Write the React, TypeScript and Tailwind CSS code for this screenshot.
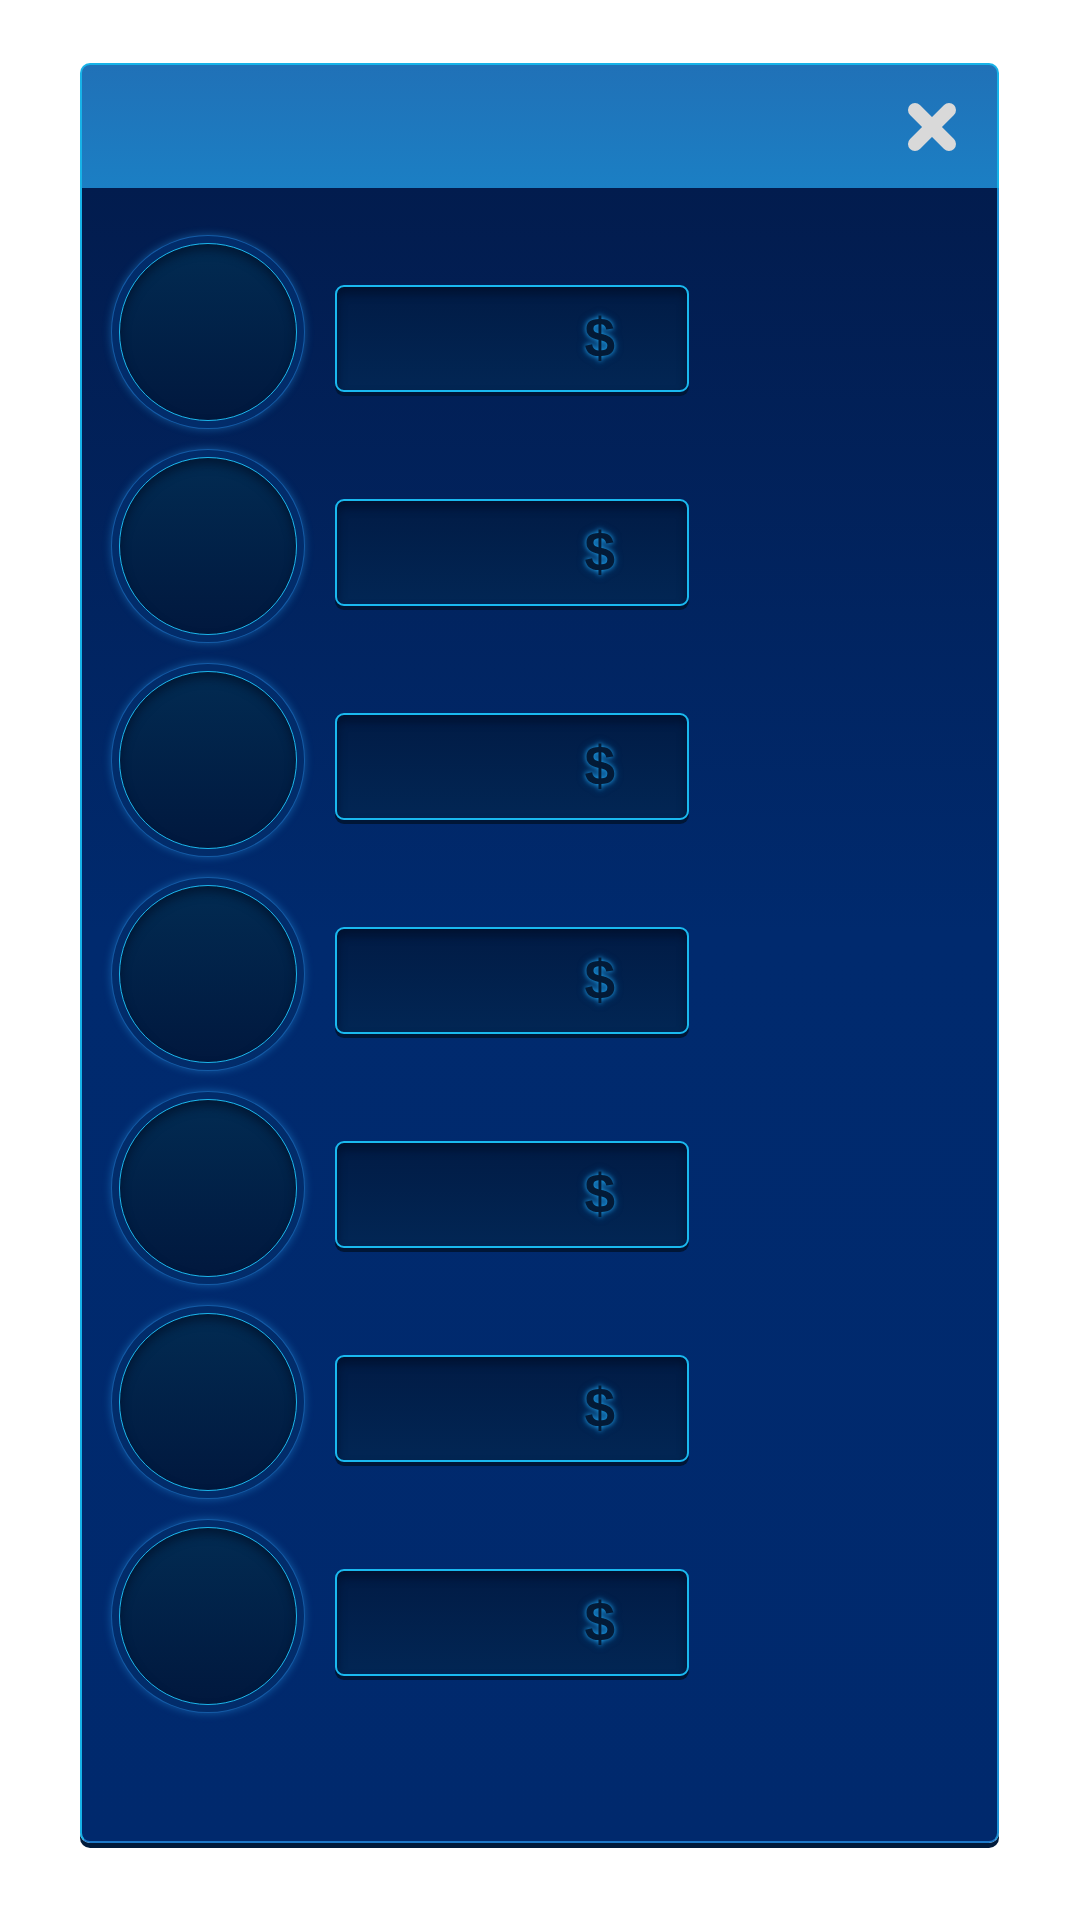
import React from 'react';

const rows = [0, 1, 2, 3, 4, 5, 6];

const CloseIcon: React.FC = () => (
  <svg width="50" height="50" viewBox="0 0 50 50">
    <line x1="8" y1="8" x2="42" y2="42" stroke="#d9d9d9" strokeWidth="14" strokeLinecap="round" />
    <line x1="42" y1="8" x2="8" y2="42" stroke="#d9d9d9" strokeWidth="14" strokeLinecap="round" />
  </svg>
);

const Row: React.FC = () => (
  <div className="flex items-center gap-[30px]">
    {/* avatar slot */}
    <div className="w-[194px] h-[194px] rounded-full flex items-center justify-center bg-[#022c6a] border border-[#1c6fc0]/70 shadow-[0_0_8px_rgba(40,150,230,0.45)]">
      <div className="w-[178px] h-[178px] rounded-full border-[1.5px] border-[#1cb6ea] bg-gradient-to-b from-[#022b52] to-[#01183e] shadow-[inset_0_6px_10px_rgba(0,10,30,0.55)]" />
    </div>
    {/* amount box */}
    <div className="mt-[12px] w-[354px] h-[107px] rounded-[9px] border-2 border-[#1ab9ef] bg-gradient-to-b from-[#011b45] to-[#022654] shadow-[inset_0_6px_10px_rgba(0,8,25,0.5),0_4px_0_#001636] flex items-center justify-end pr-[72px]">
      <span className="font-['Liberation_Sans',Arial,sans-serif] font-bold text-[55px] leading-none text-[#031a36] [text-shadow:0_0_5px_rgba(30,165,240,0.9),0_0_9px_rgba(30,150,230,0.5)]">
        $
      </span>
    </div>
  </div>
);

export default function App() {
  return (
    <div className="w-[1080px] h-[1920px] bg-white pt-[63px] pl-[80px]">
      <div className="w-[919px] rounded-[10px] shadow-[0_5px_0_#001a3a]">
        {/* header */}
        <div className="h-[125px] rounded-t-[10px] border-t-2 border-x-2 border-[#17b3e8] bg-gradient-to-b from-[#2071b7] to-[#1b7fc4] flex items-center justify-end pr-[40px]">
          <CloseIcon />
        </div>
        {/* body */}
        <div className="h-[1655px] rounded-b-[10px] border-x-2 border-b-2 border-l-[#17b3e8] border-r-[#1b8fd3] border-b-[#1d78c8] bg-gradient-to-b from-[#021c4e] via-[#002a6e] via-45% to-[#00296d] flex flex-col gap-[20px] pt-[47px] pl-[29px]">
          {rows.map((r) => (
            <Row key={r} />
          ))}
        </div>
      </div>
    </div>
  );
}
